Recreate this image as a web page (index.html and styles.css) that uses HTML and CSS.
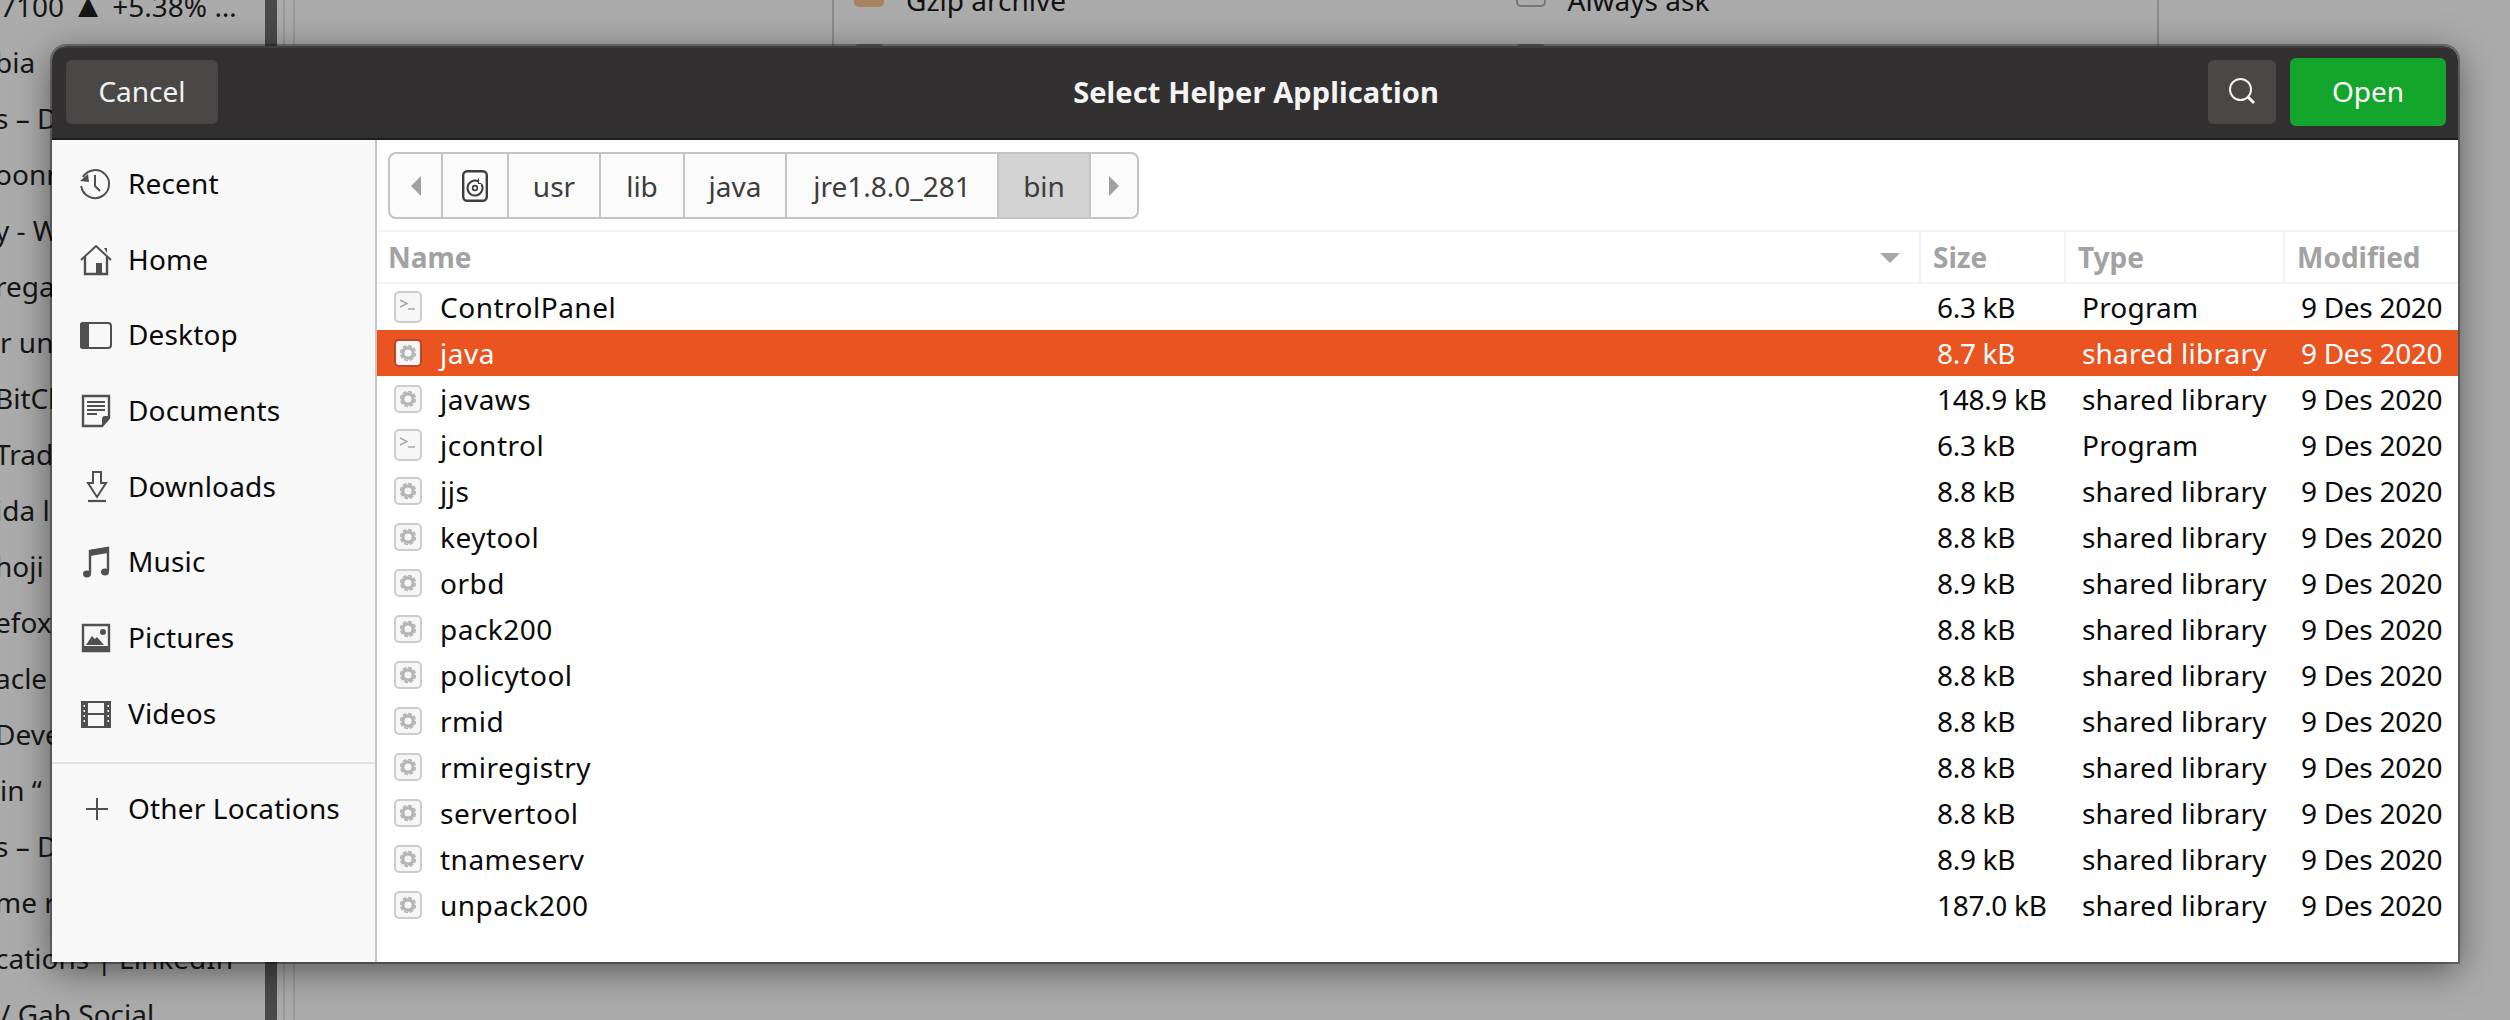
FILE: index.html
```html
<!DOCTYPE html>
<html lang="en">

<head>
    <meta charset="UTF-8">
    <title>Select Helper Application</title>
    <link rel="stylesheet" href="styles.css">
</head>

<body>
    <svg class="defs" width="0" height="0">
        <symbol id="gear" viewBox="0 0 28 28">
            <rect class="icon-edge" x="1" y="1" width="26" height="26" rx="4" fill="#f6f6f6" stroke-width="2"/>
            <circle cx="14" cy="14" r="5.200" fill="none" stroke="#b4b4b4" stroke-width="3.200"/>
            <circle cx="14" cy="14" r="7.400" fill="none" stroke="#b4b4b4" stroke-width="1.600" stroke-dasharray="4 1.800"/>
        </symbol>
        <symbol id="term" viewBox="0 0 28 32">
            <rect class="icon-edge" x="1" y="1" width="26" height="30" rx="4" fill="#f6f6f6" stroke-width="2"/>
            <path d="M6 9l7 3.500-7 3.500M14 18h7" fill="none" stroke="#a8a8a8" stroke-width="1.500"/>
        </symbol>
    </svg>

    <div class="backdrop">
        <div class="bg-list">
            <div class="bg-line">7100 <span class="tri">▲</span> +5.38% …</div>
            <div class="bg-line cut">bia</div>
            <div class="bg-line cut">s – D</div>
            <div class="bg-line cut">oonn</div>
            <div class="bg-line cut">y - W</div>
            <div class="bg-line cut">rega</div>
            <div class="bg-line">r une</div>
            <div class="bg-line cut">BitCh</div>
            <div class="bg-line cut">Trad</div>
            <div class="bg-line cut">ida l</div>
            <div class="bg-line cut">hoji</div>
            <div class="bg-line cut">efox</div>
            <div class="bg-line cut">acle</div>
            <div class="bg-line cut">Deve</div>
            <div class="bg-line">in “</div>
            <div class="bg-line cut">s – D</div>
            <div class="bg-line cut">me r</div>
            <div class="bg-line cut">cations | LinkedIn</div>
            <div class="bg-line">/ Gab Social</div>
        </div>
        <div class="bg-scroll"></div>
        <div class="bg-rule"></div>
        <div class="bg-main">
            <div class="bg-panel">
                <div class="bg-col">
                    <div class="bg-row"><span class="bg-icon bg-short bg-zip"></span>Gzip archive</div>
                    <div class="bg-row"><span class="bg-icon"></span></div>
                </div>
                <div class="bg-col">
                    <div class="bg-row"><span class="bg-icon bg-short"></span>Always ask</div>
                    <div class="bg-row"><span class="bg-icon"></span></div>
                </div>
            </div>
        </div>
    </div>

    <div class="dialog">
        <header class="titlebar">
            <div class="bar-left">
                <button class="btn btn-cancel">Cancel</button>
            </div>
            <h1 class="title">Select Helper Application</h1>
            <div class="bar-right">
                <button class="btn btn-search">
                    <svg width="28" height="28" viewBox="0 0 28 28"><circle cx="12.500" cy="12.500" r="10.500" fill="none" stroke="#f2f2f2" stroke-width="2"/><path d="M20 20l6 6" stroke="#f2f2f2" stroke-width="3"/></svg>
                </button>
                <button class="btn btn-open">Open</button>
            </div>
        </header>

        <div class="body">
            <aside class="sidebar">
                <div class="places">
                    <div class="place">
                        <svg class="place-icon" viewBox="0 0 34 34"><path d="M3 10A14 14 0 1 1 1.200 19" fill="none" stroke="#505050" stroke-width="2"/><path d="M0 14l8-7 1 8z" fill="#505050"/><path d="M15 8v11l5 5" fill="none" stroke="#505050" stroke-width="2"/></svg>
                        <span class="place-name">Recent</span>
                    </div>
                    <div class="place">
                        <svg class="place-icon" viewBox="0 0 34 34"><path d="M1 17L16 3l15 14" fill="none" stroke="#505050" stroke-width="2"/><path d="M5 14v17h22V14" fill="none" stroke="#505050" stroke-width="2.400"/><path d="M16 20h6v11h-6z" fill="#505050"/><path d="M24 5h3v5z" fill="#505050"/></svg>
                        <span class="place-name">Home</span>
                    </div>
                    <div class="place">
                        <svg class="place-icon" viewBox="0 0 34 34"><rect x="1" y="5" width="30" height="25" rx="3" fill="none" stroke="#505050" stroke-width="2"/><path d="M3 4h6v27H3a3 3 0 0 1-3-3V7a3 3 0 0 1 3-3z" fill="#505050"/></svg>
                        <span class="place-name">Desktop</span>
                    </div>
                    <div class="place">
                        <svg class="place-icon" viewBox="0 0 34 34"><path d="M3 2h26v22l-7 8H3z" fill="none" stroke="#505050" stroke-width="2.400"/><path d="M7 7h18v2H7zM7 11h18v2H7zM7 15h18v2H7zM7 19h10v2H7z" fill="#505050"/><path d="M29 22v2l-7 8v-7a3 3 0 0 1 3-3z" fill="#505050"/></svg>
                        <span class="place-name">Documents</span>
                    </div>
                    <div class="place">
                        <svg class="place-icon" viewBox="0 0 34 34"><path d="M13 2h8v11h5l-9 14-9-14h5z" fill="none" stroke="#505050" stroke-width="2"/><path d="M8 31h18" stroke="#505050" stroke-width="2.200"/></svg>
                        <span class="place-name">Downloads</span>
                    </div>
                    <div class="place">
                        <svg class="place-icon" viewBox="0 0 34 34"><path d="M10 28V6l18-3v23" fill="none" stroke="#505050" stroke-width="2.400"/><path d="M10 5l18-3v6l-18 3z" fill="#505050"/><ellipse cx="7" cy="29" rx="4" ry="3.400" fill="#505050"/><ellipse cx="25" cy="27" rx="4" ry="3.400" fill="#505050"/></svg>
                        <span class="place-name">Music</span>
                    </div>
                    <div class="place">
                        <svg class="place-icon" viewBox="0 0 34 34"><path d="M3 4h26v26H3z" fill="none" stroke="#505050" stroke-width="2.400"/><path d="M2 25h28v6H2z" fill="#505050"/><path d="M6 24l6-9 3 3 2-2 7 8z" fill="#505050"/><circle cx="23" cy="11" r="3" fill="#505050"/></svg>
                        <span class="place-name">Pictures</span>
                    </div>
                    <div class="place">
                        <svg class="place-icon" viewBox="0 0 34 34"><path d="M2 5h28v25H2zM7 5v25M25 5v25M7 17h18" fill="none" stroke="#505050" stroke-width="2"/><path d="M2 5h4v25H2zM26 5h4v25h-4z" fill="#505050"/><path d="M3.500 8h1.500v2h-1.500zM3.500 13h1.500v2h-1.500zM3.500 18h1.500v2h-1.500zM3.500 23h1.500v2h-1.500zM27.500 8h1.500v2h-1.500zM27.500 13h1.500v2h-1.500zM27.500 18h1.500v2h-1.500zM27.500 23h1.500v2h-1.500z" fill="#f8f8f8"/></svg>
                        <span class="place-name">Videos</span>
                    </div>
                </div>
                <div class="side-sep"></div>
                <div class="place">
                    <svg class="place-icon" viewBox="0 0 34 34"><path d="M6 17h22M17 6v22" stroke="#505050" stroke-width="2"/></svg>
                    <span class="place-name">Other Locations</span>
                </div>
            </aside>

            <main class="browser">
                <div class="pathbar-wrap">
                    <nav class="pathbar">
                        <div class="crumb crumb-arrow">
                            <svg width="10" height="20" viewBox="0 0 10 20"><path d="M10 0v20L0 10z" fill="#a0a0a0"/></svg>
                        </div>
                        <div class="crumb crumb-disk">
                            <svg width="26" height="32" viewBox="0 0 26 32"><rect x="1.200" y="1.200" width="23.600" height="29.600" rx="4" fill="none" stroke="#3d3d3d" stroke-width="2.400"/><path d="M19.500 14.300A7.500 7.500 0 1 1 16.500 11.400" fill="none" stroke="#3d3d3d" stroke-width="2"/><path d="M16.500 8.500v5h3" fill="none" stroke="#3d3d3d" stroke-width="1.200"/><circle cx="13" cy="18" r="2.400" fill="none" stroke="#3d3d3d" stroke-width="1.600"/></svg>
                        </div>
                        <div class="crumb crumb-usr">usr</div>
                        <div class="crumb crumb-lib">lib</div>
                        <div class="crumb crumb-java">java</div>
                        <div class="crumb crumb-jre">jre1.8.0_281</div>
                        <div class="crumb crumb-bin">bin</div>
                        <div class="crumb crumb-arrow crumb-end">
                            <svg width="10" height="20" viewBox="0 0 10 20"><path d="M0 0v20l10-10z" fill="#a0a0a0"/></svg>
                        </div>
                    </nav>
                </div>

                <div class="files">
                    <div class="file-head">
                        <div class="col-head col-name">Name<svg class="sort" width="20" height="10" viewBox="0 0 20 10"><path d="M0 0h20L10 10z" fill="#a8a8a8"/></svg></div>
                        <div class="col-head">Size</div>
                        <div class="col-head">Type</div>
                        <div class="col-head">Modified</div>
                    </div>

                    <div class="file"><div class="cell-name"><svg class="ficon" width="28" height="32"><use href="#term"/></svg>ControlPanel</div><div class="cell-num">6.3 kB</div><div class="cell-type">Program</div><div class="cell-num">9 Des 2020</div></div>
                    <div class="file selected"><div class="cell-name"><svg class="ficon" width="28" height="28"><use href="#gear"/></svg>java</div><div class="cell-num">8.7 kB</div><div class="cell-type">shared library</div><div class="cell-num">9 Des 2020</div></div>
                    <div class="file"><div class="cell-name"><svg class="ficon" width="28" height="28"><use href="#gear"/></svg>javaws</div><div class="cell-num">148.9 kB</div><div class="cell-type">shared library</div><div class="cell-num">9 Des 2020</div></div>
                    <div class="file"><div class="cell-name"><svg class="ficon" width="28" height="32"><use href="#term"/></svg>jcontrol</div><div class="cell-num">6.3 kB</div><div class="cell-type">Program</div><div class="cell-num">9 Des 2020</div></div>
                    <div class="file"><div class="cell-name"><svg class="ficon" width="28" height="28"><use href="#gear"/></svg>jjs</div><div class="cell-num">8.8 kB</div><div class="cell-type">shared library</div><div class="cell-num">9 Des 2020</div></div>
                    <div class="file"><div class="cell-name"><svg class="ficon" width="28" height="28"><use href="#gear"/></svg>keytool</div><div class="cell-num">8.8 kB</div><div class="cell-type">shared library</div><div class="cell-num">9 Des 2020</div></div>
                    <div class="file"><div class="cell-name"><svg class="ficon" width="28" height="28"><use href="#gear"/></svg>orbd</div><div class="cell-num">8.9 kB</div><div class="cell-type">shared library</div><div class="cell-num">9 Des 2020</div></div>
                    <div class="file"><div class="cell-name"><svg class="ficon" width="28" height="28"><use href="#gear"/></svg>pack200</div><div class="cell-num">8.8 kB</div><div class="cell-type">shared library</div><div class="cell-num">9 Des 2020</div></div>
                    <div class="file"><div class="cell-name"><svg class="ficon" width="28" height="28"><use href="#gear"/></svg>policytool</div><div class="cell-num">8.8 kB</div><div class="cell-type">shared library</div><div class="cell-num">9 Des 2020</div></div>
                    <div class="file"><div class="cell-name"><svg class="ficon" width="28" height="28"><use href="#gear"/></svg>rmid</div><div class="cell-num">8.8 kB</div><div class="cell-type">shared library</div><div class="cell-num">9 Des 2020</div></div>
                    <div class="file"><div class="cell-name"><svg class="ficon" width="28" height="28"><use href="#gear"/></svg>rmiregistry</div><div class="cell-num">8.8 kB</div><div class="cell-type">shared library</div><div class="cell-num">9 Des 2020</div></div>
                    <div class="file"><div class="cell-name"><svg class="ficon" width="28" height="28"><use href="#gear"/></svg>servertool</div><div class="cell-num">8.8 kB</div><div class="cell-type">shared library</div><div class="cell-num">9 Des 2020</div></div>
                    <div class="file"><div class="cell-name"><svg class="ficon" width="28" height="28"><use href="#gear"/></svg>tnameserv</div><div class="cell-num">8.9 kB</div><div class="cell-type">shared library</div><div class="cell-num">9 Des 2020</div></div>
                    <div class="file"><div class="cell-name"><svg class="ficon" width="28" height="28"><use href="#gear"/></svg>unpack200</div><div class="cell-num">187.0 kB</div><div class="cell-type">shared library</div><div class="cell-num">9 Des 2020</div></div>
                </div>
            </main>
        </div>
    </div>
</body>
</html>
```

FILE: styles.css
```css
* {
    box-sizing: border-box;
}

html, body {
    height: 100%;
}

body {
    margin: 0;
    background: #ababab;
    color: #0a0a0a;
    font-family: "Noto Sans", sans-serif;
    font-size: 28px;
    overflow: hidden;
    position: relative;
}

.defs {
    position: absolute;
}

/* the dimmed window behind the dialog */
.backdrop {
    display: flex;
    height: 100%;
    overflow: hidden;
}

.bg-list {
    width: 265px;
    margin-top: -22px;
    flex-shrink: 0;
    color: #161616;
    white-space: nowrap;
    overflow: hidden;
}

.bg-line {
    height: 56px;
    line-height: 56px;
}

.bg-line.cut {
    text-indent: -5px;
}

.tri {
    font-size: 34px;
    line-height: 0;
}

.bg-scroll {
    width: 12px;
    background: #4a4a4a;
    flex-shrink: 0;
}

.bg-rule {
    width: 12px;
    margin-left: 6px;
    border-left: 2px solid #999;
    border-right: 2px solid #999;
    flex-shrink: 0;
}

.bg-main {
    flex-grow: 1;
    padding-left: 537px;
}

.bg-panel {
    display: flex;
    width: 1327px;
    height: 200px;
    border-left: 2px solid #8a8a8a;
    border-right: 2px solid #8a8a8a;
}

.bg-col {
    padding-left: 20px;
    width: 663px;
    margin-top: -30px;
}

.bg-row {
    display: flex;
    align-items: center;
    gap: 22px;
    height: 59px;
    color: #111;
}

.bg-icon {
    width: 30px;
    height: 30px;
    border: 2px solid #777;
    border-radius: 5px;
}

.bg-short {
    height: 22px;
    margin-top: -8px;
}

.bg-zip {
    background: #a6835f;
    border-color: #a6835f;
}

.dialog {
    position: absolute;
    left: 52px;
    top: 46px;
    width: 2406px;
    height: 916px;
    display: flex;
    flex-direction: column;
    border-radius: 14px 14px 0 0;
    background: #fff;
    box-shadow: 0 0 0 2px rgba(0, 0, 0, 0.32), 0 8px 36px rgba(0, 0, 0, 0.5);
}

.titlebar {
    display: grid;
    grid-template-columns: 1fr auto 1fr;
    align-items: center;
    height: 94px;
    padding: 0 12px 2px 14px;
    background: #323030;
    border-bottom: 2px solid #1f1e1e;
    border-top: 2px solid #403e3e;
    border-radius: 14px 14px 0 0;
    flex-shrink: 0;
}

.bar-left {
    display: flex;
}

.bar-right {
    display: flex;
    justify-content: flex-end;
    align-items: center;
    gap: 14px;
}

.btn {
    display: flex;
    align-items: center;
    justify-content: center;
    height: 64px;
    border: none;
    border-radius: 6px;
    background: #4a4846;
    color: #f2f2f2;
    font-family: inherit;
    font-size: 28px;
    padding: 0 0 2px;
}

.btn-cancel {
    width: 152px;
}

.title {
    margin: 0;
    padding-bottom: 2px;
    color: #f4f4f4;
    font-size: 29px;
    font-weight: 700;
    letter-spacing: 0.1px;
}

.btn-search {
    width: 68px;
}

.btn-open {
    width: 156px;
    height: 68px;
    background: #14a52c;
    color: #fff;
}

.body {
    display: flex;
    flex-grow: 1;
    min-height: 0;
}

.sidebar {
    width: 325px;
    padding-top: 6px;
    background: #f8f8f8;
    border-right: 2px solid #c4c4c4;
    flex-shrink: 0;
}

.place {
    display: flex;
    align-items: center;
    gap: 14px;
    height: 75.7px;
    padding-left: 28px;
}

.place-icon {
    width: 34px;
    height: 34px;
    flex-shrink: 0;
}

.place-name {
    padding-bottom: 2px;
    letter-spacing: 0.15px;
}

.side-sep {
    height: 2px;
    margin: 10px 0 8px;
    background: #e2e2e2;
}

.browser {
    flex-grow: 1;
    min-width: 0;
    background: #fff;
}

.pathbar-wrap {
    height: 92px;
    padding: 12px 0 0 11px;
    border-bottom: 2px solid #f3f3f3;
}

.pathbar {
    display: inline-flex;
    height: 67px;
    border: 2px solid #c4c4c4;
    border-radius: 8px;
    background: #fbfbfb;
    color: #3d3d3d;
}

.crumb {
    display: flex;
    align-items: center;
    justify-content: center;
    border-left: 2px solid #c4c4c4;
}

.crumb:first-child {
    border-left: none;
}

.crumb-arrow {
    width: 51px;
}

.crumb-end {
    width: 48px;
}

.crumb-disk {
    width: 66px;
}

.crumb-usr {
    width: 92px;
}

.crumb-lib {
    width: 84px;
}

.crumb-java {
    width: 102px;
}

.crumb-jre {
    width: 212px;
}

.crumb-bin {
    width: 92px;
    background: #d3d3d3;
}

.file-head, .file {
    display: grid;
    grid-template-columns: 1542px 145px 219px 1fr;
}

.file-head {
    height: 52px;
    border-bottom: 2px solid #f3f3f3;
}

.col-head {
    display: flex;
    align-items: center;
    padding-left: 12px;
    color: #a2a2a2;
    font-weight: 700;
    border-left: 2px solid #f3f3f3;
}

.col-name {
    position: relative;
    padding-left: 11px;
    border-left: none;
}

.sort {
    position: absolute;
    right: 19px;
    top: 21px;
}

.file {
    height: 46px;
    line-height: 46px;
    align-items: center;
    --edge: #cdcdcd;
}

.icon-edge {
    stroke: var(--edge);
}

.file > div {
    padding-left: 18px;
    white-space: nowrap;
}

.file > .cell-name {
    display: flex;
    align-items: center;
    padding-left: 17px;
    gap: 18px;
    letter-spacing: 0.5px;
}

.file > .cell-num {
    letter-spacing: -0.3px;
}

.file > .cell-type {
    letter-spacing: 0.2px;
}

.ficon {
    flex-shrink: 0;
}

.file.selected {
    background: #e95420;
    color: #fff;
    --edge: #b5482a;
}
```
